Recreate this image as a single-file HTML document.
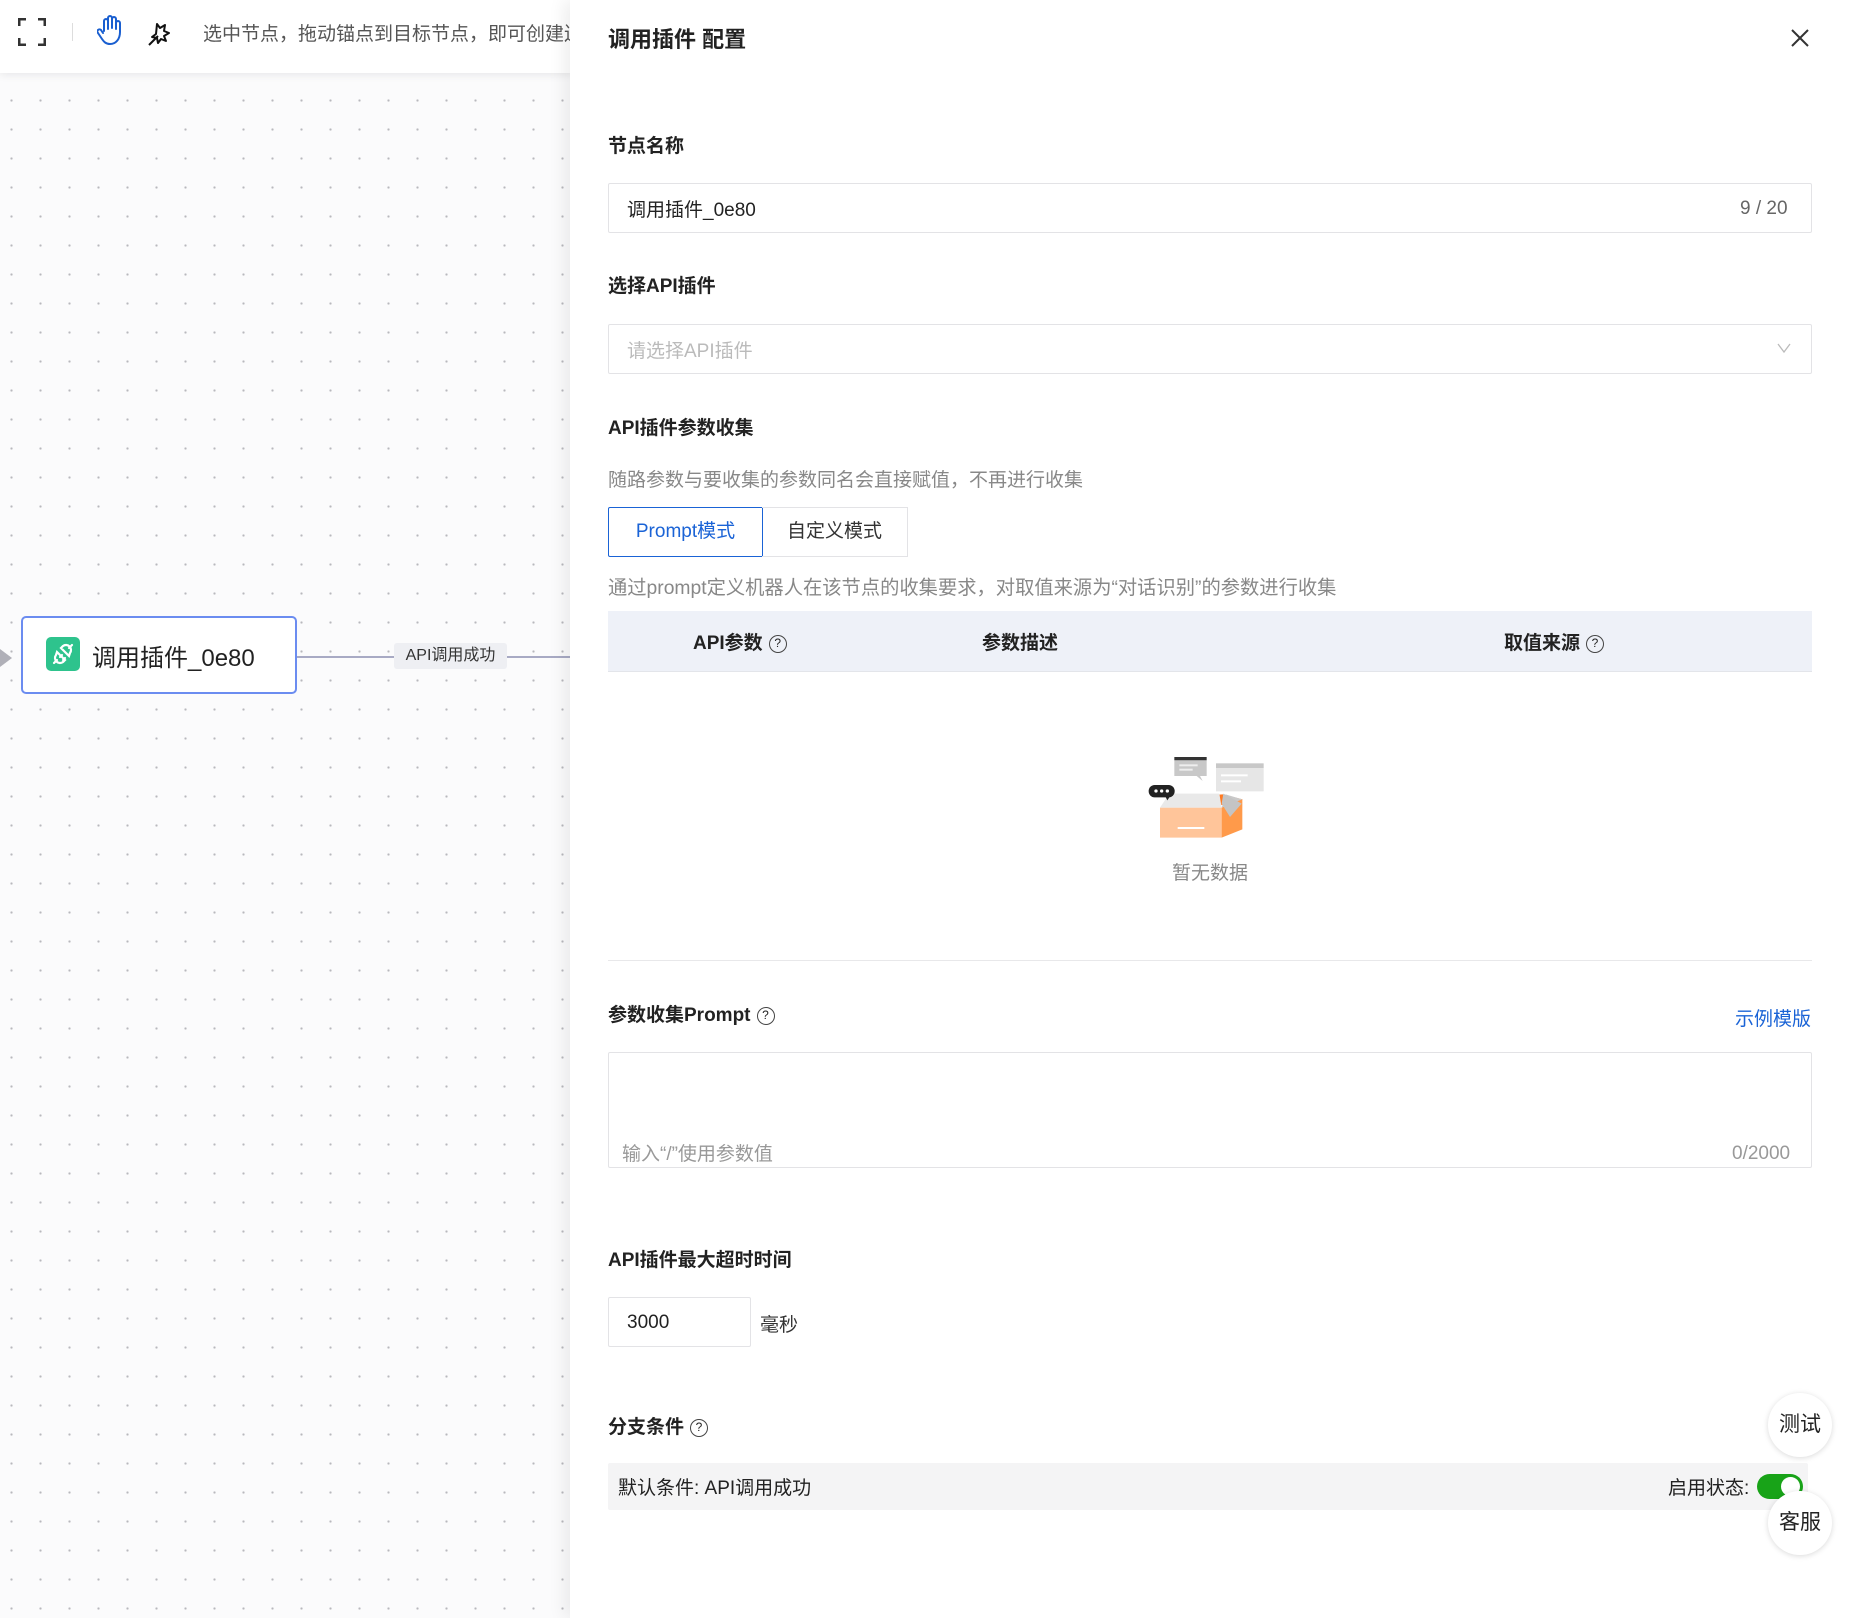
<!DOCTYPE html>
<html><head><meta charset="utf-8"><style>
*{box-sizing:border-box;margin:0;padding:0}
body{width:1850px;height:1618px;overflow:hidden;position:relative;font-family:"Liberation Sans","Noto Sans CJK SC",sans-serif;background:#fbfbfc;color:#222}
.abs{position:absolute}
.canvas{left:0;top:0;width:573px;height:1618px;background-color:#fbfbfc;background-image:radial-gradient(circle,#b8b8bd 1px,transparent 1.3px);background-size:29px 29px;background-position:26px 86px}
.toolbar{left:0;top:0;width:573px;height:73px;background:#fff;box-shadow:0 2px 8px rgba(0,0,0,.08)}
.panel{left:570px;top:0;width:1280px;height:1618px;background:#fff;box-shadow:-6px 0 16px rgba(0,0,0,.07)}
.lbl{font-size:19px;font-weight:bold;color:#222;left:608px}
.box{border:1px solid #e3e3e6;border-radius:2px;background:#fff}
.q{display:inline-block;width:18px;height:18px;border:1.5px solid #444;border-radius:50%;font-size:12px;line-height:15px;text-align:center;font-weight:normal;vertical-align:2px;margin-left:6px}
.fab{width:64px;height:64px;border-radius:50%;background:#fff;box-shadow:0 1px 6px rgba(0,0,0,.15);font-size:21px;text-align:center;line-height:64px;color:#222}
.t{font-size:19px}
</style></head><body>
<div class="abs canvas"></div>
<div class="abs toolbar">
 <svg class="abs" style="left:18px;top:18px" width="28" height="28" viewBox="0 0 28 28" fill="none" stroke="#333" stroke-width="3"><path d="M1 8V1h7M20 1h7v7M27 20v7h-7M8 27H1v-7"/></svg>
 <div class="abs" style="left:72px;top:23px;width:1px;height:18px;background:#ddd"></div>
 <svg class="abs" style="left:97px;top:14px" width="28" height="32" viewBox="0 0 28 32" fill="none" stroke="#1a5fd0" stroke-width="2" stroke-linecap="round" stroke-linejoin="round"><path d="M7 17V7a2 2 0 014 0v8M11 13V4a2 2 0 014 0v10M15 14V5a2 2 0 014 0v10M19 15V9a2 2 0 014 0v9c0 7-4 12-10 12-4 0-6-2-8-5l-4-6a2 2 0 013-3l2 3"/></svg>
 <svg class="abs" style="left:147px;top:18px" width="28" height="28" viewBox="0 0 28 28" fill="none" stroke="#111" stroke-width="2" stroke-linejoin="round"><path d="M2 27l9-9M10 6l3 4 5-3-1 6 5 2-5 3 2 5-5-2-3 4-1-5-5-1 4-3z"/></svg>
 <div class="abs" style="left:203px;top:19px;font-size:19px;color:#555;white-space:nowrap">选中节点，拖动锚点到目标节点，即可创建连线</div>
</div>
<div class="abs" style="left:0;top:649px;width:0;height:0;border-top:9px solid transparent;border-bottom:9px solid transparent;border-left:12px solid #b0b0b8"></div>
<div class="abs" style="left:297px;top:656px;width:280px;height:2px;background:#a8aac4"></div>
<div class="abs" style="left:394px;top:643px;width:113px;height:26px;background:#eeeff3;border-radius:3px;font-size:16px;text-align:center;line-height:26px;color:#333">API调用成功</div>
<div class="abs" style="left:21px;top:616px;width:276px;height:78px;border:2px solid #6b8cf0;border-radius:5px;background:#fff"></div>
<div class="abs" style="left:46px;top:637px;width:34px;height:34px;background:#2ec38d;border-radius:5px">
 <svg width="34" height="34" viewBox="0 0 34 34" fill="none" stroke="#fff" stroke-width="2.2" stroke-linecap="round"><path d="M8 26l3-3M26 8l-3 3M11 15l8 8-2 2a5 5 0 01-7-7zM23 19l-8-8 2-2a5 5 0 017 7zM14 20l2-2M17 23l2-2"/></svg>
</div>
<div class="abs" style="left:92px;top:638px;font-size:24px;color:#222">调用插件_0e80</div>
<div class="abs panel"></div>
<div class="abs" style="left:608px;top:22px;font-size:22px;font-weight:bold">调用插件 配置</div>
<svg class="abs" style="left:1790px;top:28px" width="20" height="20" viewBox="0 0 20 20" stroke="#333" stroke-width="2"><path d="M2 2l16 16M18 2L2 18"/></svg>
<div class="abs lbl" style="top:131px">节点名称</div>
<div class="abs box" style="left:608px;top:183px;width:1204px;height:50px"></div>
<div class="abs t" style="left:627px;top:195px">调用插件_0e80</div>
<div class="abs t" style="left:1740px;top:198px;color:#666">9 / 20</div>
<div class="abs lbl" style="top:271px">选择API插件</div>
<div class="abs box" style="left:608px;top:324px;width:1204px;height:50px"></div>
<div class="abs t" style="left:627px;top:336px;color:#bbb">请选择API插件</div>
<svg class="abs" style="left:1777px;top:342px" width="14" height="12" viewBox="0 0 14 12" fill="none" stroke="#bbb" stroke-width="1.3"><path d="M1 2l6 8 6-8"/></svg>
<div class="abs lbl" style="top:413px">API插件参数收集</div>
<div class="abs t" style="left:608px;top:465px;color:#888">随路参数与要收集的参数同名会直接赋值，不再进行收集</div>
<div class="abs t" style="left:608px;top:507px;width:155px;height:50px;border:1.5px solid #1a63d6;border-radius:2px 0 0 2px;color:#1a63d6;text-align:center;line-height:47px">Prompt模式</div>
<div class="abs t" style="left:762px;top:507px;width:146px;height:50px;border:1px solid #e3e3e6;border-left:none;text-align:center;line-height:48px;color:#333">自定义模式</div>
<div class="abs" style="left:608px;top:572px;font-size:19.3px;color:#888">通过prompt定义机器人在该节点的收集要求，对取值来源为“对话识别”的参数进行收集</div>
<div class="abs" style="left:608px;top:611px;width:1204px;height:61px;background:#eef1f8;border-bottom:1px solid #e3e5ea"></div>
<div class="abs t" style="left:693px;top:628px;font-weight:bold">API参数<span class="q">?</span></div>
<div class="abs t" style="left:982px;top:628px;font-weight:bold">参数描述</div>
<div class="abs t" style="left:1504px;top:628px;font-weight:bold">取值来源<span class="q">?</span></div>
<svg class="abs" style="left:1136px;top:741px" width="160" height="110" viewBox="0 0 480 330">
 <rect x="115" y="48" width="97" height="10" fill="#333"/><path d="M115 58h97v47h-20l8 15-18-15h-67z" fill="#c8c8c8"/><rect x="130" y="70" width="55" height="6" fill="#eee"/><rect x="130" y="83" width="40" height="6" fill="#eee"/>
 <rect x="240" y="67" width="143" height="14" fill="#c8c8c8"/><rect x="240" y="81" width="143" height="70" fill="#e6e6e6"/><rect x="255" y="100" width="80" height="6" fill="#fff"/><rect x="255" y="118" width="60" height="6" fill="#fff"/>
 <path d="M110 170l150-10 60 15-40 20z" fill="#ff7a22"/>
 <path d="M72 200h185v90H72z" fill="#ffc59a"/><path d="M257 200l62-25v90l-62 25z" fill="#ff9a4a"/>
 <path d="M72 200l28-42h150l7 42z" fill="#e9e9e9"/><path d="M257 200l62-25-50-15z" fill="#c9c9c9"/><path d="M262 158l55 30-35 40-25-40z" fill="#c4c4c4"/>
 <rect x="125" y="258" width="80" height="6" fill="#fff"/>
 <rect x="38" y="132" width="78" height="37" rx="18" fill="#222"/><path d="M88 166l6 12 8-12z" fill="#222"/><circle cx="60" cy="150" r="5" fill="#fff"/><circle cx="77" cy="150" r="5" fill="#fff"/><circle cx="94" cy="150" r="5" fill="#fff"/>
</svg>
<div class="abs t" style="left:1172px;top:858px;color:#888">暂无数据</div>
<div class="abs" style="left:608px;top:960px;width:1204px;height:1px;background:#e8e8ea"></div>
<div class="abs lbl" style="top:1000px">参数收集Prompt<span class="q">?</span></div>
<div class="abs t" style="left:1735px;top:1004px;color:#1a63d6">示例模版</div>
<div class="abs box" style="left:608px;top:1052px;width:1204px;height:116px"></div>
<div class="abs t" style="left:622px;top:1139px;color:#999">输入“/”使用参数值</div>
<div class="abs t" style="left:1732px;top:1143px;color:#999">0/2000</div>
<div class="abs lbl" style="top:1245px">API插件最大超时时间</div>
<div class="abs box" style="left:608px;top:1297px;width:143px;height:50px"></div>
<div class="abs t" style="left:627px;top:1312px">3000</div>
<div class="abs t" style="left:760px;top:1310px;color:#333">毫秒</div>
<div class="abs lbl" style="top:1412px">分支条件<span class="q">?</span></div>
<div class="abs" style="left:608px;top:1463px;width:1200px;height:47px;background:#f4f4f5;border-radius:2px"></div>
<div class="abs t" style="left:618px;top:1473px;color:#222">默认条件: API调用成功</div>
<div class="abs t" style="left:1668px;top:1473px;color:#222">启用状态:</div>
<div class="abs" style="left:1757px;top:1474px;width:46px;height:25px;border-radius:13px;background:#18a318"><div class="abs" style="right:3px;top:3px;width:19px;height:19px;border-radius:50%;background:#fff"></div></div>
<div class="abs fab" style="left:1768px;top:1393px">测试</div>
<div class="abs fab" style="left:1768px;top:1491px">客服</div>
</body></html>
